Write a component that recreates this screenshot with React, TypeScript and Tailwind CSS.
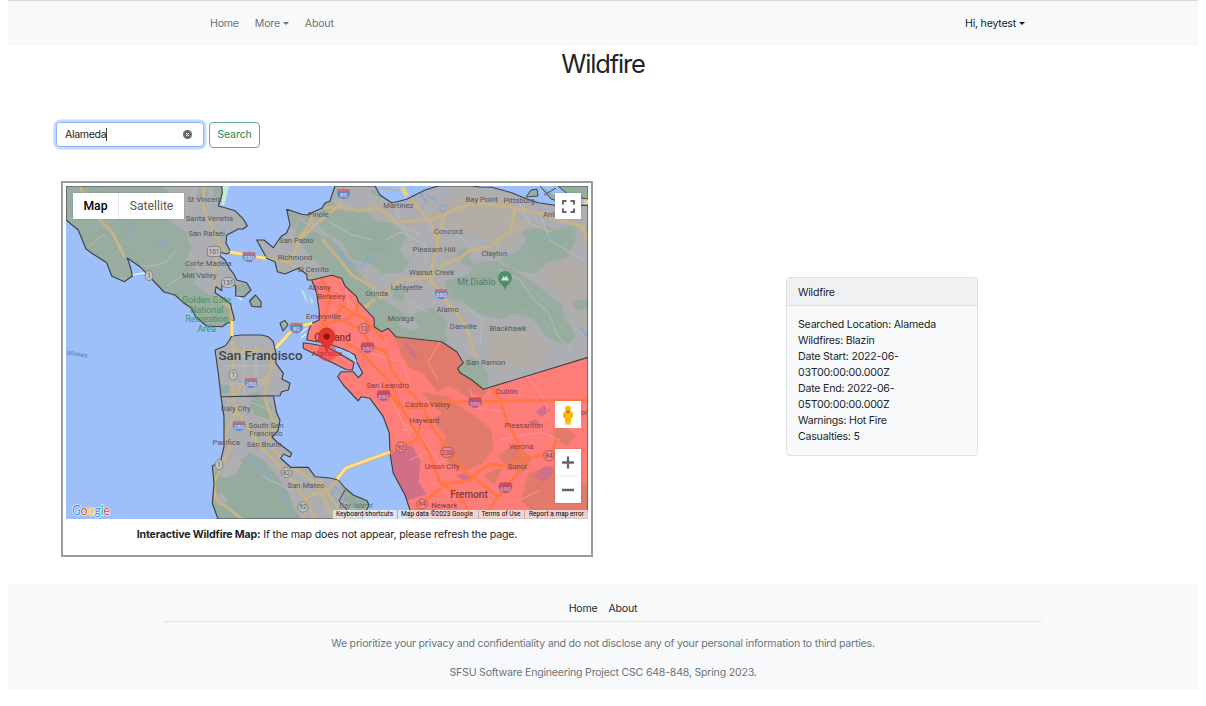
import React from "react";

const MARIN =
  "M66 186H221.7L222.3 193.3 218.3 206 223.3 207.3 235 210.7 242.7 218.3 247.3 225.7 243.3 229 238.3 229 233.3 231.7 226.7 235 226 243.3 230.7 251.7 226.7 254 220.7 252.3 220 256 225 260 229.3 268.3 233.3 273.3 236.7 280 246.7 282.7 251 290 244.3 296.7 235.7 296V286L230 281.7 222.3 282.7 221.7 290.7 216 286.7 215 292.7 223.3 298.3 230.7 304 231.7 309.3 234.3 318.3 233.3 321.7 226.7 323.3 222.3 326.7 206.7 326 196 317.3 191 307.7 183.3 302.7 175 295 164 292 140 266.7 127.3 258 130.7 268.3 132.3 276 124.3 281.7 111.7 276 106.7 262.7 93 254 86 249 78.3 230 66 220Z";
const CONTRA =
  "M335 186H375L380 195 391.7 202.7 398 201.5 406.7 199.3 425 190 438 186H471.7L480 187 491.7 187.3 511.7 192.7 525 198.3 538.3 202.7 555 205.3H588V357.3L483.3 389.3 472 380 460 372.7 457.7 368.3 463.3 362.7 456.7 351.7 441.7 341.7 395.7 336.7 388.3 328.3 381.7 331.7 374.3 326.7 374 318.3 358.3 301.7 356.7 296.7 345 286 341.7 278.3 331.7 275.3 325 276.7 311.7 280H307.3L306.7 274.3 298.3 268.3 285 274 277.3 271.7 275 261.7 266.7 258.3 256.7 240H264L273.3 247.7 280.7 236.7 286.7 232.7 290 225 286.7 209.3 301.7 214.3 306.7 215 321.7 208.3 325 203 330 201Z";
const ALAMEDA =
  "M311.7 280L325 276.7 331.7 275.3 341.7 278.3 345 286 356.7 296.7 358.3 301.7 374 318.3 374.3 326.7 381.7 331.7 388.3 328.3 395.7 336.7 441.7 341.7 456.7 351.7 463.3 362.7 457.7 368.3 460 372.7 472 380 483.3 389.3 588 357.3V519H408L410 510 405 495 393.3 473.3 390 453.3 389.3 433.3 383.3 416.7 370 398.3 361 396.7 358.3 401 343.3 385 337.7 376.7 341 371.7H353.3L358.3 377.7 362.7 373 356.7 361.7 355 355 343.3 349 326.7 343.3 306.7 340 308.5 331 311.7 323.3 319.3 320V311.7L316.7 293.3Z";
const ISLE =
  "M303.3 342.7L312 344 326.7 346.7 340 354 354 362.3 352.5 370 346 369.5 323.3 358.3 303.3 348.3Z";
const SF =
  "M231.7 336L241.7 335H261.7L268.3 336.7 273.3 341.7 276 353.3V363.3L283.3 373.3 282 379 290 383.3 288.3 390 281.7 391.7 280 395.7 221 396.7 218.3 373.3 215 350 225 346 229 341Z";
const SANMATEO =
  "M221 396.7L273.3 395.7 276.7 413.3 280 420 278 431 272 437 277 442 291.7 453.3 290 457 283.3 454 280.7 458.3 290.7 467.3H308.3L315 476.7 330 478 338.3 480 345 488 353.3 495 367 500.7 369 505 362 519H218L212.3 503.3 214 483.3 212.3 465.7 220 463.3 224 446.7V416.7Z";

const greenMarin = [
  "M66 186H150L166 190 172 205 168 222 184 232 190 248 183 262 196 272 192 284 208 296 222 299 231 306 233 318 222 326 207 326 190 307 164 292 140 266 128 258 131 276 112 276 106 262 86 249 78 230 66 220Z",
  "M200 190L207 192 205 200 198 198ZM215 188L222 186 221 197 216 198ZM236 287L247 284 250 290 243 296Z",
];
const greenContra = [
  "M326 199L345 214 364 211 374 222 390 224 405 236 398 251 408 262 400 272 382 272 371 262 352 258 343 241 328 232 318 222Z",
  "M300 222L312 232 330 240 350 262 364 282 384 302 404 315 396 326 410 332 436 328 448 341 395 336 388 328 382 331 374 326 374 318 357 297 343 280 325 268 309 252 296 235Z",
  "M446 282L468 276 478 264 496 262 512 271 530 282 546 294 560 306 564 320 574 336 566 344 548 336 534 318 514 312 500 318 478 312 462 302 449 297Z",
  "M503 259L520 252 528 240 524 232 546 228 556 231 574 227 574 241 566 256 546 262 534 272 516 269Z",
  "M458 251L466 250 472 266 463 263ZM414 316L430 308 446 322 442 336 424 332ZM462 364L474 359 486 372 487 387 474 382 458 371ZM574 302L588 300V308L578 309ZM395 290L404 292 402 300 394 298Z",
  "M372 192L380 190 381 197ZM302 217L310 216 309 222ZM290 212L299 215 293 227Z",
];
const tanContra = [
  "M434 216L448 202 474 195 514 200 514 216 534 226 516 238 506 247 492 240 474 230 448 228Z",
  "M546 254L562 250 576 264 588 272V322L573 312 560 290 546 276Z",
  "M500 332L530 336 548 348 540 362 500 368 488 352ZM366 203L384 205 388 214 378 216ZM418 276L432 280 424 284Z",
];
const brownRed = [
  "M396 337L441 342 457 352 463 363 458 370 480 387 468 396 450 384 438 390 424 372 410 366 402 352Z",
  "M424 394L446 398 462 410 472 416 490 430 492 448 482 462 462 470 448 460 442 446 448 436 434 420 444 414Z",
  "M500 456L514 446 530 458 524 470 508 468ZM530 474L556 466 588 488V519H542L522 500ZM454 378L462 376 486 390 482 396ZM486 476L500 470 494 482ZM558 424L574 436 566 444 554 436Z",
];
const purpleRed = [
  "M391 454L396 448 412 446 420 462 418 482 426 494 408 500 394 473Z",
  "M457 476L464 474 472 478 468 482ZM536 412L544 406 550 411 541 416ZM534 476L546 466 554 470 544 482ZM528 422L536 420 540 426ZM405 342L414 352 418 362 412 356Z",
];
const roadsGrey = [
  "M80 186L88 204 100 220 112 232 124 256",
  "M204 186L203 205 209 222 218 240 224 252 247 255 265 258",
  "M217 254L214 272 215 290 219 300 231 308 232 322",
  "M265 258L288 262 302 270 314 282",
  "M290 262L302 238 318 222 336 208 346 192 349 186",
  "M296 242L308 226 314 212",
  "M325 208L343 207 358 211 378 208 390 216 396 223 412 221 434 219 456 209 476 203 505 206 535 212 560 220 580 226 588 236",
  "M399 186L408 196 418 208 430 221 438 243 433 262 430 280 440 290 448 304 456 312 466 326 472 344 476 358",
  "M445 214L438 240",
  "M323 240L338 258 352 275 372 287 380 298 400 280 426 278 430 276",
  "M368 306L360 310 374 300",
  "M515 211L510 232 500 238 490 247 470 250 460 258 444 264 432 278",
  "M584 226L588 250",
];
const roadsMateo = [
  "M232 337L233 350 244 352 262 350M233 352L232 390 237 412 230 424",
  "M237 396L240 386 250 382 266 380 272 368 271 350",
  "M237 412L248 426 258 444 274 460 286 472 302 494 316 519",
  "M268 380L264 396 272 418 278 428 266 432 274 450 290 466 310 478 320 490 334 519",
  "M232 420L224 436 230 448 222 464 214 484 216 500 228 508 242 519",
  "M304 519L306 500 312 494 330 489 340 478M318 478L338 508 346 519",
];
const roadsRed = [
  "M322 278L330 300 322 322 332 336 348 343 362 352 374 366 390 382 402 408 416 432 428 450 440 482 452 490 466 506 474 519",
  "M322 324L344 320 356 312 358 304 366 298M344 322L360 328 372 346 386 352 392 370 402 384 420 402 434 430 446 446 462 470 478 480 498 497",
  "M340 305L366 320 384 340M318 332L334 320 342 306",
  "M384 384L398 406 420 408 444 402 500 401 588 400",
  "M476 358L488 380 500 400 508 424 520 446 526 464 508 484 490 508 482 519",
  "M392 451L402 447 416 440 420 426",
  "M412 512L424 502 446 484 470 480 480 470 490 464 504 466 530 458 552 452 556 440",
];
const roadsThin = [
  "M330 222L350 234 372 240M386 240L400 232 424 244 426 262M440 226L462 238 480 254M408 300L426 312 436 300M460 300L482 320 480 342M500 270L520 280 534 300 548 312 558 336 572 352M520 204L530 224 552 232M396 210L404 228 420 234M540 214L550 240 566 250 588 262",
  "M104 234L90 246M140 266L152 266 166 262 176 250M166 286L184 275 200 270M220 356H272M222 366H276M244 342V396M256 340V380M222 384H266M250 402L270 410M262 476L290 490 302 484M300 500L324 492",
];
const roadsThinRed =
  "M330 284L352 304 368 330M346 288L350 312M332 310H356M350 342L378 356 402 362 410 384M400 420L424 440 444 470M392 400L412 442M470 390L476 408 508 412M430 480L456 500 480 490M440 342L428 362 438 380M524 372L544 398 550 420M500 440L540 432 560 440M402 430H424M410 460L430 450M430 468L448 458M488 500L502 514M520 500L540 490";

type Label = [string, number, number, number?, string?];
const G = "#55575a";
const R = "#8a393e";
const labels: Label[] = [
  ["St Vincent", 204.7, 201.7], ["Santa Venetia", 209.3, 221], ["San Rafael", 206.7, 236], ["Corte Madera", 208.3, 266],
  ["Mill Valley", 199.3, 277.7], ["Pinole", 318.3, 217], ["San Pablo", 296.3, 243.3], ["Richmond", 295, 259.5], ["El Cerrito", 313.3, 271.7],
  ["Martinez", 398.3, 207.7], ["Bay Point", 481.7, 202], ["Pittsburg", 519, 202.5], ["Ant", 549, 217], ["Concord", 448.3, 233.5],
  ["Pleasant Hill", 434, 251.7], ["Clayton", 494.3, 256], ["Walnut Creek", 431.7, 275], ["Lafayette", 406.7, 290], ["Orinda", 376.7, 295.5],
  ["Alamo", 447.7, 311.7], ["Moraga", 400.7, 321.3], ["Danville", 463.3, 329.3], ["Blackhawk", 508, 331], ["San Ramon", 485.7, 364.7],
  ["Daly City", 235.7, 411.3], ["South San", 266, 428.3], ["Francisco", 266, 436], ["Pacifica", 226.3, 445.3], ["San Bruno", 264.3, 446.7], ["San Mateo", 306, 487.7],
  ["Golden Gate", 206.7, 303.3, 9, "#4d9160"], ["National", 206.7, 312.7, 9, "#4d9160"], ["Recreation", 206.7, 322, 9, "#3f9a5b"], ["Area", 206.7, 331.5, 9, "#2f9c55"],
  ["Mt Diablo", 476.5, 284.5, 9, "#4f8062"],
  ["Albany", 319.5, 289.7, 7.5, R], ["Berkeley", 331.5, 299, 7.5, R], ["Emeryville", 323.5, 318.5, 7.7, "#7a3a42"], ["Alameda", 327, 355.5, 7.7, "#a62f35"],
  ["San Leandro", 387.7, 388.3, 7.7, R], ["Castro Valley", 427.7, 406.7, 7.7, R], ["Hayward", 424.3, 423.3, 7.7, R], ["Dublin", 506.7, 394.3, 7.7, R],
  ["Pleasanton", 523.7, 428.3, 7.7, R], ["Verona", 521.3, 449, 7.7, R], ["Union City", 442, 469, 7.7, R], ["Sunol", 517.3, 469, 7.7, R], ["Newark", 444.3, 508, 7.7, R],
  ["or", 584, 415, 7.7, R],
];

const interstates: [string, number, number, boolean?][] = [
  ["580", 249, 257], ["80", 296.3, 328], ["80", 343.5, 194], ["680", 441.3, 294], ["280", 251, 383], ["280", 239, 426],
  ["580", 367.5, 347.5, true], ["880", 383.5, 395.5, true], ["580", 475, 402.3, true], ["680", 505.5, 487.5, true],
];
const routes: [string, number, number, boolean?][] = [
  ["101", 214, 251.5], ["131", 228, 282.5], ["1", 149, 275.7], ["1", 233.3, 375], ["1", 219, 464.7], ["82", 286.5, 472.5], ["92", 303, 507],
  ["13", 364, 328.5, true], ["92", 401, 447.2, true], ["238", 447.3, 452.3, true], ["84", 549, 455.7, true], ["84", 422, 504, true],
];

function Strokes({ d, color, width }: { d: string[]; color: string; width: number }) {
  return <path d={d.join("")} fill="none" stroke={color} strokeWidth={width} strokeLinejoin="round" strokeLinecap="round" />;
}

function BayMap() {
  return (
    <svg viewBox="66 186 522 333" className="block h-[333px] w-[522px]" fontFamily="Roboto, sans-serif">
      <defs>
        <clipPath id="grey"><path d={MARIN + CONTRA + SF + SANMATEO} /></clipPath>
        <clipPath id="red"><path d={ALAMEDA + ISLE} /></clipPath>
      </defs>
      <rect x="66" y="186" width="522" height="333" fill="#9dc0fa" />
      <path d="M222 186H229L224 206 221 205ZM300 288L304 292 308 304 305 299ZM309 296L313 301 312 305ZM352 354L362 374" fill="#c5e8d8" />
      <path d="M132 275L144 273 157 276M236 296L242 300M300 333L307 328M301 338L306 334" fill="none" stroke="#e8eef0" strokeWidth="1.3" />
      <path d="M540 186L551 199 570 205M558 186H588V199L570 196Z" fill="#94ad9f" stroke="#3d4a50" strokeWidth="1" />
      <path d="M544 195L556 188" fill="none" stroke="#3d4a50" strokeWidth="1" />
      <path d="M526 197L531 190 537 189 538 196Z" fill="#94ad9f" stroke="#3d4a50" />
      <path d="M584 202H588" stroke="#f3cf72" strokeWidth="5" />
      <path d="M402 187L407 196" stroke="#f3cf72" strokeWidth="4" />
      <path d="M380 188L400 191" stroke="#b1b3b6" strokeWidth="3" />

      <g clipPath="url(#grey)">
        <rect x="66" y="186" width="522" height="333" fill="#acaeb1" />
        <path d={tanContra.join("")} fill="#b3ada7" stroke="#b3ada7" strokeWidth="5" strokeLinejoin="round" />
        <path d={greenMarin.join("") + greenContra.join("")} fill="#98aca0" stroke="#98aca0" strokeWidth="3" strokeLinejoin="round" />
        <path d="M450 288L470 282 496 270 520 286 552 310 556 330 536 310 506 306 470 304ZM524 240L540 232 570 232 560 252 540 258ZM346 220L366 226 392 232 388 252 366 252Z" fill="#94ac9e" />
        <path
          d="M216 470L222 480 240 462 250 454 262 460 276 476 286 490 294 510 300 519H216L213 500ZM250 402L264 399 272 408 268 418 256 414ZM222 384L228 384 228 392 222 392ZM248 396L258 393 260 400ZM343 488L352 496 366 502 360 510 345 500Z"
          fill="#95ab9d" stroke="#95ab9d" strokeWidth="2" strokeLinejoin="round"
        />
        <path d="M224 464L234 458 243 462 236 474 224 478ZM214 498L222 492 227 502 218 506Z" fill="#adafb1" />
        <Strokes d={roadsThin} color="#bcc1c3" width={0.8} />
        <path d="M100 215L108 219M128 226L134 233M158 246L166 240M338 250L348 262 356 266M361 268L368 258 378 261M440 205L446 206 446 212 440 211ZM420 192L426 202M428 196L436 200M248 456L262 468 270 478M282 492L290 508M226 385V391M546 238H556M334 486L342 494M322 484L334 492 330 498 344 500M580 328L588 336" fill="none" stroke="#86a7d8" strokeWidth="1.6" strokeLinecap="round" />
        <path d="M104 190L96 202 112 214 126 206 132 226 118 238 100 230 90 240M72 200L84 212 98 204M112 252L122 244 132 250" fill="none" stroke="#7ea189" strokeWidth="0.8" strokeDasharray="2 2" />
        <Strokes d={[...roadsGrey, ...roadsMateo]} color="#c1b292" width={3.1} />
        <Strokes d={[...roadsGrey, ...roadsMateo]} color="#c9b385" width={1.9} />
      </g>

      <g clipPath="url(#red)">
        <rect x="300" y="270" width="288" height="249" fill="#ff7d79" />
        <path d={brownRed.join("")} fill="#e27a6b" stroke="#e27a6b" strokeWidth="3" strokeLinejoin="round" />
        <path d={purpleRed.join("")} fill="#d16f89" stroke="#d16f89" strokeWidth="1" strokeLinejoin="round" />
        <path d={roadsThinRed} fill="none" stroke="#ff9690" strokeWidth="0.9" />
        <Strokes d={roadsRed} color="#ff7843" width={2.8} />
      </g>

      <g fill="#95ab9f">
        <path d="M249.5 301L255.5 295 261 301.5V307L252 306.5Z" />
        <path d="M280 323L285 320.5 288 325 283 331Z" fill="#a4b2ad" />
      </g>
      <path
        d={MARIN + CONTRA + ALAMEDA + ISLE + SF + SANMATEO + "M249.5 301L255.5 295 261 301.5V307L252 306.5ZM280 323L285 320.5 288 325 283 331Z"}
        fill="none" stroke="#3b4246" strokeWidth="1.15" strokeLinejoin="round"
      />
      <path d="M345 352L350 354 356 362" fill="none" stroke="#a9d0f5" strokeWidth="2.2" />
      <path d="M345 490L339 501 347 510" fill="none" stroke="#3b4246" />

      <g fill="none" stroke="#d9b45c" strokeWidth="4">
        <path d="M230 252L266 258.5M232 321V336M276 348L294 328 312 323M390 452L346 468 337 479" />
        <path d="M230 252L266 258.5M232 321V336M276 348L294 328 312 323M390 452L346 468 337 479" stroke="#fde293" strokeWidth="2.8" />
      </g>

      {interstates.map(([n, x, y, red], i) => (
        <g key={i} transform={`translate(${x} ${y}) scale(1.12)`}>
          <path d="M-5-4.5Q-2.500-3.500 0-4.700 2.500-3.500 5-4.500 9 3 0 5.200-9 3-5-4.500Z" fill={red ? "#ad5285" : "#6687bf"} stroke={red ? "#d87a8a" : "#b7c2d4"} strokeWidth="0.6" />
          <path d="M-5-4.600Q-2.500-3.700 0-4.800 2.500-3.700 5-4.600L5.900-2.300H-5.900Z" fill={red ? "#d24c50" : "#c47277"} />
          <text y="3" fontSize="5.500" fontWeight="500" textAnchor="middle" fill={red ? "#f3a5ad" : "#d6deeb"}>{n}</text>
        </g>
      ))}
      {routes.map(([n, x, y, red], i) => {
        const w = n.length * 2.6 + 5.4;
        return (
          <g key={i}>
            <rect x={x - w / 2} y={y - 5} width={w} height="10" rx={n === "101" ? 2.5 : 5} fill={red ? "#f58582" : "#bfc0c1"} stroke={red ? "#9c4b4e" : "#77797c"} strokeWidth="0.800" />
            <text x={x} y={y + 2.3} fontSize="6.500" textAnchor="middle" fill={red ? R : G}>{n}</text>
          </g>
        );
      })}

      {labels.map(([t, x, y, size = 7.7, color = G]) => (
        <text key={t + y} x={x} y={y} fontSize={size} fill={color} textAnchor="middle">{t}</text>
      ))}
      <text x="356" y="507.7" fontSize="7.500" fontStyle="italic" fill="#64717a" textAnchor="middle">Bay Island</text>
      <text x="66.500" y="354.500" fontSize="6.800" fontStyle="italic" fill="#4d79bd" transform="rotate(9 66 354)">allones</text>
      <text x="260.500" y="360" fontSize="13" fontWeight="500" fill="#3f4245" textAnchor="middle" textLength="84" lengthAdjust="spacingAndGlyphs">San Francisco</text>
      <text x="332.500" y="341" fontSize="10" fontWeight="500" fill="#8b2f36" textAnchor="middle">Oakland</text>
      <text x="469" y="497.500" fontSize="10" fontWeight="500" fill="#84383d" textAnchor="middle">Fremont</text>

      <path d="M505 290C503 284 498 283 498 278A7 7 0 0 1 512 278C512 283 507 284 505 290Z" fill="#4e9067" />
      <path d="M501 280.500L503.500 276 505 278 506.500 275.500 509 280.500Z" fill="#d5e3da" />

      <circle cx="327" cy="352" r="9.500" fill="#ef3038" opacity="0.450" />
      <path d="M326.700 352C325.500 345 318.500 343.500 318.500 336.300A8.200 8.200 0 0 1 334.900 336.300C334.900 343.500 328 345 326.700 352Z" fill="#e5322d" stroke="#cc2b2b" strokeWidth="0.700" />
      <circle cx="326.700" cy="336.500" r="3.100" fill="#921512" />

      <g fontFamily="Lato, sans-serif" fontSize="12.500" stroke="#fff" strokeWidth="1.200" paintOrder="stroke">
        <text x="72" y="514.500" textLength="38" lengthAdjust="spacingAndGlyphs">
          <tspan fill="#4285f4">G</tspan><tspan fill="#ea4335">o</tspan><tspan fill="#fbbc04">o</tspan>
          <tspan fill="#4285f4">g</tspan><tspan fill="#34a853">l</tspan><tspan fill="#ea4335">e</tspan>
        </text>
      </g>
    </svg>
  );
}

function Caret() {
  return <span className="ml-[3px] inline-block border-x-[3px] border-t-[3px] border-x-transparent border-t-current align-[2px]" />;
}

export default function App() {
  return (
    <div className="h-[706px] overflow-hidden bg-white px-2 font-['Inter',sans-serif] text-[10.6px] tracking-[-0.22px] text-[#212529]">
      <nav className="flex h-[46px] items-center justify-between border-t border-[#d9dadb] bg-[#f8f9fb] pt-px pr-[173px] pl-[202px]">
        <div className="flex gap-4 text-[#6d7277]">
          <a>Home</a>
          <a>More<Caret /></a>
          <a>About</a>
        </div>
        <a className="text-[#17191b]">Hi, heytest<Caret /></a>
      </nav>

      <h1 className="h-[75px] pt-[3px] text-center text-[25.5px] leading-[30px] tracking-[-1.15px]">Wildfire</h1>

      <form className="flex h-[27px] items-center gap-[5px] pl-12">
        <div className="flex h-[25px] w-[148px] items-center justify-between rounded-[4px] border border-[#86b7fe] bg-white pr-[11px] pl-2 shadow-[0_0_0_2.500px_#c5dafd]">
          <span className="border-r border-[#444] leading-[13px] tracking-[-0.35px]">Alameda</span>
          <svg viewBox="0 0 10 10" className="size-[9px]">
            <circle cx="5" cy="5" r="5" fill="#69696b" />
            <path d="M3.300 3.300L6.700 6.700M6.700 3.300L3.300 6.700" stroke="#fff" strokeWidth="1.100" />
          </svg>
        </div>
        <button type="button" className="h-[26px] w-[51px] rounded-[4px] border border-[#65ad89] tracking-[-0.1px] text-[#198754]">Search</button>
      </form>

      <main className="flex pt-[33px] pl-[53px]">
        <figure className="h-[376px] w-[532px] border-2 border-[#999c9c] px-[3px] pt-[3px]">
          <div className="relative w-[522px] tracking-normal">
            <BayMap />
            <div className="absolute top-[7px] left-[7px] flex h-[26px] w-[111px] bg-white font-['Roboto',sans-serif] text-[12.200px] leading-[26px] shadow-[0_0_1px_rgba(0,0,0,0.3)]">
              <span className="w-[46px] border-r border-[#e9e9e9] text-center font-medium text-black">Map</span>
              <span className="flex-1 text-center text-[#565656]">Satellite</span>
            </div>
            <div className="absolute top-[7px] right-[7px] grid size-[26px] place-items-center bg-white shadow-[0_0_1px_rgba(0,0,0,0.3)]">
              <svg viewBox="0 0 13 13" className="size-[13px]" fill="none" stroke="#666" strokeWidth="2">
                <path d="M1 4.500V1H4.500M8.500 1H12V4.500M12 8.500V12H8.500M4.500 12H1V8.500" />
              </svg>
            </div>
            <div className="absolute top-[215px] right-[7px] grid h-[27px] w-[26px] place-items-center bg-white">
              <svg viewBox="0 0 12 20" className="h-5 w-3">
                <circle cx="6" cy="3.300" r="2.900" fill="#fbbc04" />
                <path d="M2.500 6.500H9.500Q11 7 11 9V12.500L9.200 13 8.700 18.500H3.300L2.800 13 1 12.500V9Q1 7 2.500 6.500Z" fill="#fbbc04" />
                <path d="M3 5.500L6 9 9 5.500Z" fill="#e26a35" />
                <path d="M3 9V13M9 9V13M6 13V18" stroke="#e59c0b" strokeWidth="0.700" />
                <path d="M2.500 19H9.500" stroke="#dcb76a" strokeWidth="1" />
              </svg>
            </div>
            <div className="absolute top-[263px] right-[7px] flex h-[54px] w-[26px] flex-col items-center bg-white shadow-[0_0_1px_rgba(0,0,0,0.3)]">
              <svg viewBox="0 0 26 54" className="h-[54px] w-[26px]" stroke="#666" strokeWidth="2.300">
                <path d="M7 13.500H19M13 7.500V19.500M7 41H19" />
                <path d="M3.500 27H22.500" stroke="#e6e6e6" strokeWidth="1" />
              </svg>
            </div>
            <div className="absolute right-0 bottom-0 flex h-[9px] divide-x divide-[#b9b1b1] bg-[#f5f5f5]/70 font-['Roboto',sans-serif] text-[6.600px] leading-[9px] whitespace-nowrap text-black">
              <span className="w-[65px] pr-px text-center">Keyboard shortcuts</span>
              <span className="w-[81px] pr-[2px] text-center">Map data ©2023 Google</span>
              <span className="w-[46px] pr-px text-center">Terms of Use</span>
              <span className="w-[63px] text-center">Report a map error</span>
            </div>
          </div>
          <figcaption className="pt-2 text-center leading-4 tracking-[-0.16px]">
            <b className="font-bold">Interactive Wildfire Map:</b> If the map does not appear, please refresh the page.
          </figcaption>
        </figure>

        <section className="mt-24 ml-[193px] h-[179px] w-[192px] rounded-[4px] border border-[#dfe0e2] bg-[#f8f9fb]">
          <h2 className="h-[28px] border-b border-[#dfe0e2] bg-[#f0f1f3] pl-[11px] leading-[29px]">Wildfire</h2>
          <div className="pt-[11px] pr-11 pl-[11px] leading-4 whitespace-nowrap">
            <p>Searched Location: Alameda</p>
            <p>Wildfires: Blazin</p>
            <p>Date Start: 2022-06-<br />03T00:00:00.000Z</p>
            <p>Date End: 2022-06-<br />05T00:00:00.000Z</p>
            <p>Warnings: Hot Fire</p>
            <p>Casualties: 5</p>
          </div>
        </section>
      </main>

      <footer className="mt-[27px] flex h-[106px] flex-col items-center bg-[#f8f9fb] pt-[17px] leading-4 text-[#6d747a]">
        <div className="flex h-[21px] w-[878px] justify-center gap-[11px] border-b border-[#e2e4e7] text-[#25292d]">
          <a>Home</a>
          <a>About</a>
        </div>
        <p className="pt-[14px]">We prioritize your privacy and confidentiality and do not disclose any of your personal information to third parties.</p>
        <p className="pt-[13px]">SFSU Software Engineering Project CSC 648-848, Spring 2023.</p>
      </footer>
    </div>
  );
}
